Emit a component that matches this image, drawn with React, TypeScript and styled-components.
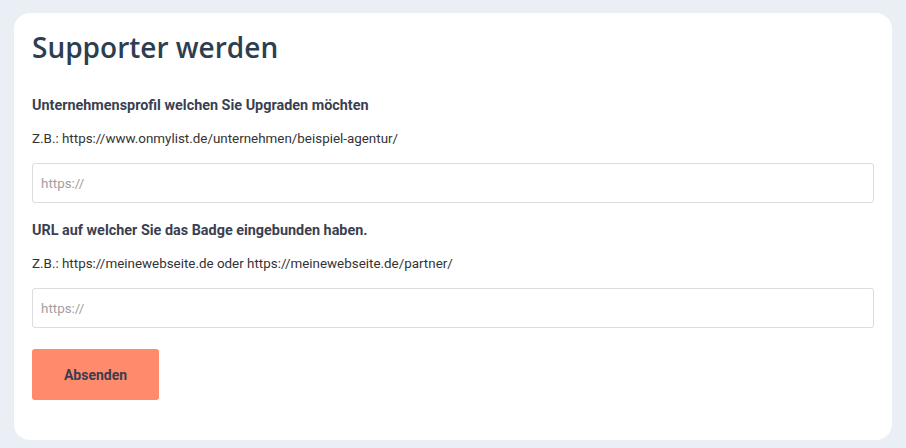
import React from "react";
import styled, { createGlobalStyle } from "styled-components";

const GlobalStyle = createGlobalStyle`
  body {
    margin: 0;
    background-color: #eaeff6;
    font-family: Roboto, "Liberation Sans", sans-serif;
  }
`;

type FieldProps = {
  label: string;
  hint: string;
};

function Field({ label, hint }: FieldProps) {
  return (
    <FieldGroup>
      <Label>{label}</Label>
      <Hint>{hint}</Hint>
      <Input type="text" placeholder="https://" />
    </FieldGroup>
  );
}

function App() {
  return (
    <Page>
      <GlobalStyle />
      <Card>
        <Title>Supporter werden</Title>
        <Form onSubmit={(e) => e.preventDefault()}>
          <Field
            label="Unternehmensprofil welchen Sie Upgraden möchten"
            hint="Z.B.: https://www.onmylist.de/unternehmen/beispiel-agentur/"
          />
          <Field
            label="URL auf welcher Sie das Badge eingebunden haben."
            hint="Z.B.: https://meinewebseite.de oder https://meinewebseite.de/partner/"
          />
          <SubmitButton type="submit">Absenden</SubmitButton>
        </Form>
      </Card>
    </Page>
  );
}

const Page = styled.div`
  padding: 13px 14px 8px;
`;

const Card = styled.div`
  background-color: #ffffff;
  border-radius: 16px;
  padding: 16px 18px 40px;
`;

const Title = styled.h1`
  margin: 0 0 31px;
  font-family: "Open Sans", sans-serif;
  font-weight: 600;
  font-size: 28px;
  line-height: 36px;
  color: #2c3e50;
`;

const Form = styled.form`
  display: flex;
  flex-direction: column;
  gap: 18px;
  align-items: flex-start;
`;

const FieldGroup = styled.div`
  display: flex;
  flex-direction: column;
  width: 100%;
`;

const Label = styled.label`
  font-weight: 700;
  font-size: 14.4px;
  line-height: 20px;
  color: #3a3f51;
`;

const Hint = styled.p`
  margin: 13px 0 14px;
  font-size: 13.4px;
  line-height: 20px;
  color: #333333;
`;

const Input = styled.input`
  box-sizing: border-box;
  width: 100%;
  height: 40px;
  padding: 0 8px;
  border: 1px solid #dcdcdc;
  border-radius: 3px;
  font-family: Roboto, sans-serif;
  font-size: 13.4px;
  color: #333333;
  outline: none;
  &::placeholder {
    color: #a0a0a0;
  }
`;

const SubmitButton = styled.button`
  margin-top: 3px;
  width: 127px;
  height: 51px;
  border: none;
  border-radius: 3px;
  background-color: #ff8a6c;
  font-family: Roboto, sans-serif;
  font-weight: 700;
  font-size: 14px;
  color: #3c3d4f;
  cursor: pointer;
`;

export default App;
